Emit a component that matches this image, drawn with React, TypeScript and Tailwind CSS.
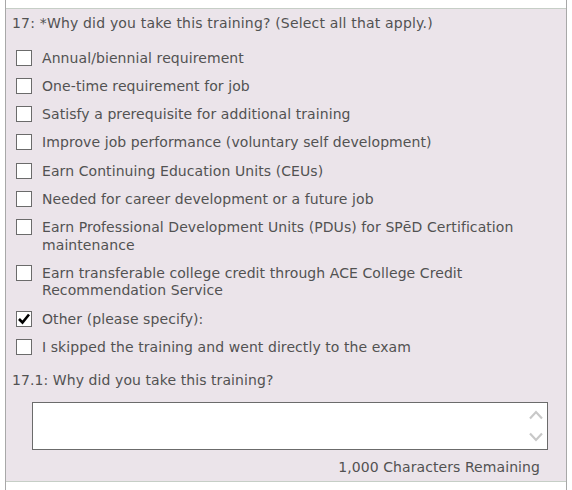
import React from "react";

const items: string[][] = [
  ["Annual/biennial requirement"],
  ["One-time requirement for job"],
  ["Satisfy a prerequisite for additional training"],
  ["Improve job performance (voluntary self development)"],
  ["Earn Continuing Education Units (CEUs)"],
  ["Needed for career development or a future job"],
  ["Earn Professional Development Units (PDUs) for SPēD Certification", "maintenance"],
  ["Earn transferable college credit through ACE College Credit", "Recommendation Service"],
  ["Other (please specify):"],
  ["I skipped the training and went directly to the exam"],
];

function Box({ checked }: { checked: boolean }) {
  return (
    <div className="w-[16px] h-[16px] border border-[#6b6b6b] bg-white shrink-0 relative mt-[0px]">
      {checked && (
        <svg viewBox="0 0 16 16" className="absolute left-[-1px] top-[-1px] w-[16px] h-[16px]">
          <path d="M3 8 L6.5 11.5 L13 3.5" fill="none" stroke="#000" strokeWidth="2.6" />
        </svg>
      )}
    </div>
  );
}

export default function App() {
  return (
    <div
      className="w-[572px] h-[490px] bg-white text-[#525252] text-[14px] leading-[17.5px] tracking-[0.08px]"
      style={{ fontFamily: '"DejaVu Sans", Verdana, sans-serif' }}
    >
      <div className="ml-[5px] w-[562px] h-[490px] border-l border-r border-[#a8a8a8] flex flex-col">
        <div className="h-[8px] bg-white shrink-0" />
        <div className="h-[474px] border-t border-b border-[#c6cec6] bg-[#ebe4ea] pl-[6px] pr-[20px] pt-[6px] shrink-0">
          <div className="tracking-[0.18px]">17: *Why did you take this training? (Select all that apply.)</div>
          <div className="flex flex-col gap-[10.75px] pl-[4px] mt-[17px]">
            {items.map((lines, i) => (
              <div key={i} className="flex gap-[10px] items-start">
                <Box checked={i === 8} />
                <div>
                  {lines.map((l, j) => (
                    <div key={j}>{l}</div>
                  ))}
                </div>
              </div>
            ))}
          </div>
          <div className="mt-[16px]">17.1: Why did you take this training?</div>
          <div className="ml-[20px] mt-[12px] w-[516px] h-[48px] border border-[#6b6b6b] bg-white flex justify-end">
            <div className="w-[22px] flex flex-col justify-between items-center py-[7px]">
              <svg viewBox="0 0 16 10" className="w-[16px] h-[10px]">
                <path d="M2 8.5 L8 2 L14 8.5" fill="none" stroke="#c8c8c8" strokeWidth="2.2" />
              </svg>
              <svg viewBox="0 0 16 10" className="w-[16px] h-[10px]">
                <path d="M2 1.5 L8 8 L14 1.5" fill="none" stroke="#c8c8c8" strokeWidth="2.2" />
              </svg>
            </div>
          </div>
          <div className="text-right mt-[9px] pr-[6px]">1,000 Characters Remaining</div>
        </div>
        <div className="flex-1 bg-white" />
      </div>
    </div>
  );
}
